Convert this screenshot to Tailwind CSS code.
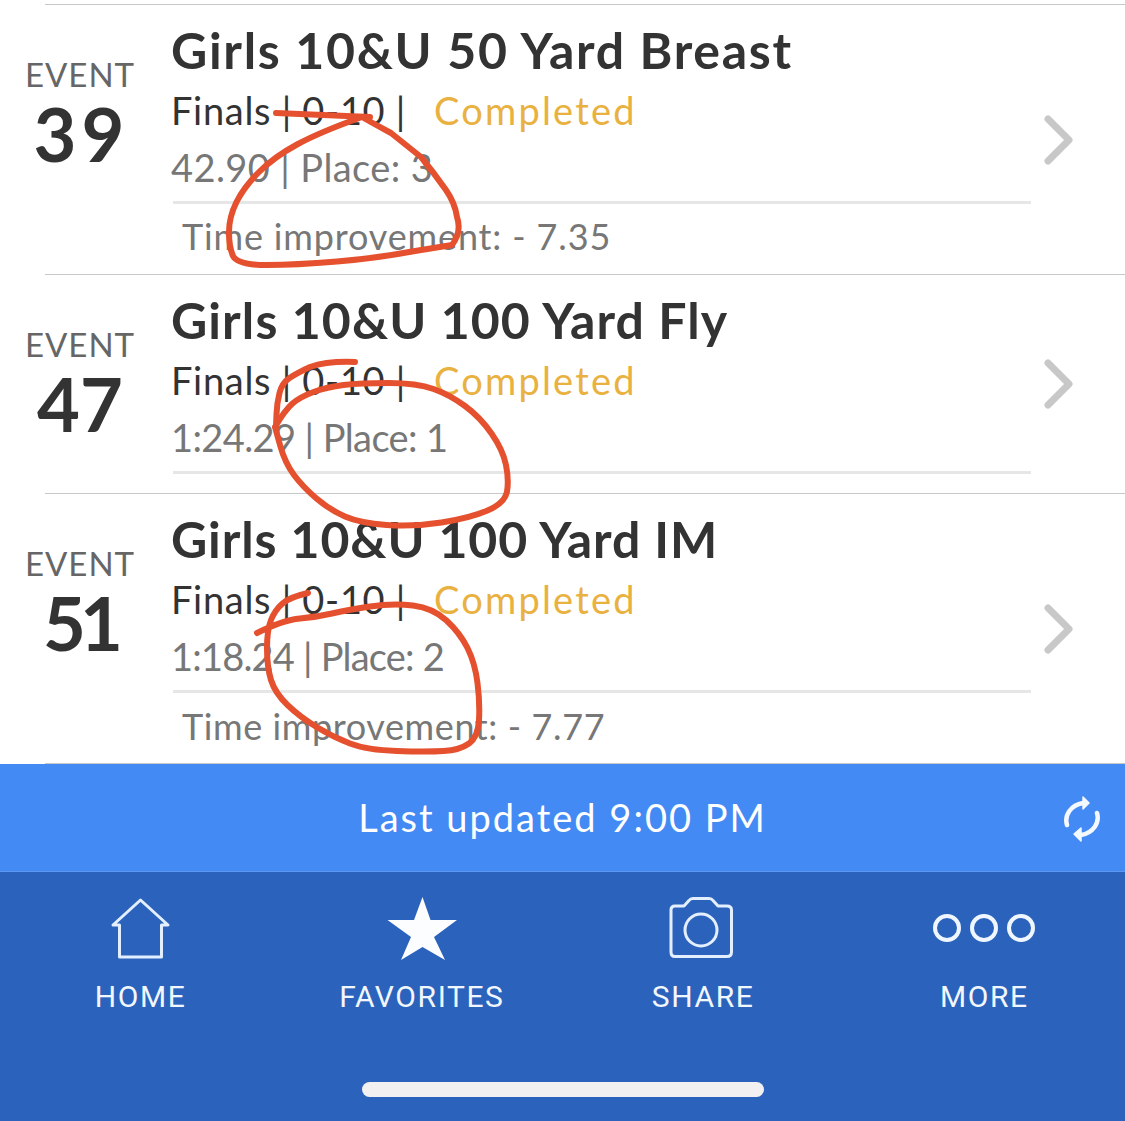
<!DOCTYPE html>
<html lang="en">
<head>
    <meta charset="UTF-8">
    <title>Meet Results</title>
    <script src="https://cdn.jsdelivr.net/npm/@tailwindcss/browser@4"></script>
</head>
<body class="bg-white font-['Lato',sans-serif] overflow-hidden">
    <div class="relative w-[1125px] h-[1121px] flex flex-col">
        <!-- event list -->
        <div class="h-[764px] pt-1 overflow-hidden">
            <div class="ml-[45px] h-px bg-[#c8c8c8]"></div>
            <div class="h-[269px] flex">
                <div class="w-[160px] px-[26px] shrink-0 flex flex-col items-center pt-[50px]">
                    <div class="text-[33px] leading-[38px] tracking-[1px] text-[#666]">EVENT</div>
                    <div class="mt-[3px] ml-[3px] text-[74px] leading-[76px] tracking-[5px] font-bold text-[#333]">39</div>
                </div>
                <div class="ml-[11px] w-[860px] pt-[15px]">
                    <div class="text-[50px] leading-[60px] tracking-[1.7px] font-bold text-[#333]">Girls 10&amp;U 50 Yard Breast</div>
                    <div class="text-[38px] leading-[60px] text-[#333] flex"><span class="w-[263px] tracking-[0.7px]">Finals | 0-10 |</span><span class="tracking-[2.2px] text-[#e9b140]">Completed</span></div>
                    <div class="mt-px text-[38px] leading-[52px] tracking-[0.4px] text-[#777]">42.90 | Place: 3</div>
                    <div class="ml-[2px] mt-[8px] h-[3px] bg-[#e6e6e6]"></div>
                    <div class="pl-[11px] mt-[10px] text-[36px] leading-[44px] tracking-[0.85px] text-[#777]">Time improvement: - 7.35</div>
                </div>
                <div class="flex-1 flex items-center pl-[10px]">
                    <svg width="34" height="52" viewBox="0 0 34 52" fill="none" stroke="#c8c8c8" stroke-width="7" stroke-linecap="round" stroke-linejoin="round"><path d="M7 5L28 26L7 47"/></svg>
                </div>
            </div>
            <div class="ml-[45px] h-px bg-[#c8c8c8]"></div>
            <div class="h-[218px] flex">
                <div class="w-[160px] px-[26px] shrink-0 flex flex-col items-center pt-[50px]">
                    <div class="text-[33px] leading-[38px] tracking-[1px] text-[#666]">EVENT</div>
                    <div class="mt-[3px] text-[74px] leading-[76px] font-bold text-[#333]">47</div>
                </div>
                <div class="ml-[11px] w-[860px] pt-[15px]">
                    <div class="text-[50px] leading-[60px] tracking-[1.1px] font-bold text-[#333]">Girls 10&amp;U 100 Yard Fly</div>
                    <div class="text-[38px] leading-[60px] text-[#333] flex"><span class="w-[263px] tracking-[0.7px]">Finals | 0-10 |</span><span class="tracking-[2.2px] text-[#e9b140]">Completed</span></div>
                    <div class="mt-px text-[38px] leading-[52px] tracking-[-0.6px] text-[#777]">1:24.29 | Place: 1</div>
                    <div class="ml-[2px] mt-[8px] h-[3px] bg-[#e6e6e6]"></div>
                </div>
                <div class="flex-1 flex items-center pl-[10px]">
                    <svg width="34" height="52" viewBox="0 0 34 52" fill="none" stroke="#c8c8c8" stroke-width="7" stroke-linecap="round" stroke-linejoin="round"><path d="M7 5L28 26L7 47"/></svg>
                </div>
            </div>
            <div class="ml-[45px] h-px bg-[#c8c8c8]"></div>
            <div class="h-[269px] flex">
                <div class="w-[160px] px-[26px] shrink-0 flex flex-col items-center pt-[50px]">
                    <div class="text-[33px] leading-[38px] tracking-[1px] text-[#666]">EVENT</div>
                    <div class="mt-[3px] text-[74px] leading-[76px] tracking-[-6px] font-bold text-[#333]">51</div>
                </div>
                <div class="ml-[11px] w-[860px] pt-[15px]">
                    <div class="text-[50px] leading-[60px] tracking-[0.9px] font-bold text-[#333]">Girls 10&amp;U 100 Yard IM</div>
                    <div class="text-[38px] leading-[60px] text-[#333] flex"><span class="w-[263px] tracking-[0.7px]">Finals | 0-10 |</span><span class="tracking-[2.2px] text-[#e9b140]">Completed</span></div>
                    <div class="mt-px text-[38px] leading-[52px] tracking-[-0.8px] text-[#777]">1:18.24 | Place: 2</div>
                    <div class="ml-[2px] mt-[8px] h-[3px] bg-[#e6e6e6]"></div>
                    <div class="pl-[11px] mt-[11px] text-[36px] leading-[44px] tracking-[0.6px] text-[#777]">Time improvement: - 7.77</div>
                </div>
                <div class="flex-1 flex items-center pl-[10px]">
                    <svg width="34" height="52" viewBox="0 0 34 52" fill="none" stroke="#c8c8c8" stroke-width="7" stroke-linecap="round" stroke-linejoin="round"><path d="M7 5L28 26L7 47"/></svg>
                </div>
            </div>
            <div class="ml-[45px] h-px bg-[#c8c8c8]"></div>
        </div>

        <!-- last updated bar -->
        <div class="relative h-[108px] bg-[#438af5] border-b border-[#5b97ef] flex items-center justify-center text-white text-[38px] tracking-[2px]">
            Last updated 9:00 PM
            <svg class="absolute right-[24px] top-[32px]" width="38" height="46" viewBox="0 0 38 46" fill="none" stroke="#f4f8ff" stroke-width="4.5" stroke-linecap="round">
                <path d="M4 29C1 19 8 9 20 7"/>
                <path d="M34 17C37 27 30 37 18 39"/>
                <path d="M26 7L20 1V13Z" fill="#f4f8ff" stroke-width="1.5" stroke-linejoin="round"/>
                <path d="M11 38L18 32V45Z" fill="#f4f8ff" stroke-width="1.5" stroke-linejoin="round"/>
            </svg>
        </div>

        <!-- tab bar -->
        <div class="relative flex-1 bg-[#2b63bc] grid grid-cols-4 text-[#f2f6fd] font-['Roboto',sans-serif] text-[30px] tracking-[1.6px]">
            <div class="flex flex-col items-center pt-[25px]">
                <svg class="h-[64px]" width="64" height="64" viewBox="0 0 64 64" fill="none" stroke="#e3efff" stroke-width="3" stroke-linejoin="round"><path d="M31.5 3L59 28H52.5V60H10.5V28H4Z"/></svg>
                <div class="mt-[18px] leading-[36px]">HOME</div>
            </div>
            <div class="flex flex-col items-center pt-[25px]">
                <svg class="h-[64px]" width="72" height="64" viewBox="0 0 72 64" fill="#fbfdff"><path d="M36.5 0L44.5 23H71L48 40L59 63L36.5 50L15 63L25 40L1.5 23H28Z"/></svg>
                <div class="mt-[18px] leading-[36px]">FAVORITES</div>
            </div>
            <div class="flex flex-col items-center pt-[25px]">
                <svg class="h-[64px]" width="68" height="64" viewBox="0 0 68 64" fill="none" stroke="#e3efff" stroke-width="3" stroke-linejoin="round"><path d="M6 9H15L20 3.5C21 2 22 1.5 24 1.5H40C42 1.5 43 2 44 3.5L49 9H58C61 9 62.5 10.5 62.5 13V55C62.5 58 61 59.5 58 59.5H6C3 59.5 2 58 2 55V13C2 10.5 3 9 6 9Z"/><circle cx="32" cy="33" r="16"/></svg>
                <div class="mt-[18px] leading-[36px]">SHARE</div>
            </div>
            <div class="flex flex-col items-center pt-[25px]">
                <svg class="h-[64px]" width="104" height="64" viewBox="0 0 104 64" fill="none" stroke="#f0f6ff" stroke-width="4"><circle cx="15" cy="31" r="12"/><circle cx="52" cy="31" r="12"/><circle cx="89" cy="31" r="12"/></svg>
                <div class="mt-[18px] leading-[36px]">MORE</div>
            </div>
            <div class="absolute left-[362px] top-[210px] w-[402px] h-[15px] rounded-full bg-[#f2f0f0]"></div>
        </div>

        <!-- red pen marks drawn over the screenshot -->
        <svg class="absolute left-0 top-0 pointer-events-none" width="1125" height="1121" viewBox="0 0 1125 1121" fill="none" stroke="#e5502e" stroke-width="6" stroke-linecap="round" stroke-linejoin="round">
            <path d="M276 113L370 117"/>
            <path d="M362 117Q320 132 297 144.5Q274 157 259 172Q244 187 236.5 202Q229 217 229 232Q229 247 233 256Q238 265 266.5 265Q295 265 337 261.5Q379 258 415 251L452 245Q462 232 457 217Q455 203 446 190Q434 173 421 157Q406 145 391 133Q376 125 362 117"/>
            <path d="M355 362Q327 361 310 367Q297 373 289.5 378Q282 383 279.5 393Q277 403 276.5 414L276 427"/>
            <path d="M275 427Q285 410 292.5 403.5Q300 397 313.5 392Q327 387 343.5 385Q360 383 388.5 383Q417 383 433.5 389Q450 395 465 406Q480 417 491.5 433.5Q503 450 506 465Q509 480 507 491.5Q505 503 487.5 510.5Q470 518 441.5 522.5Q413 527 386.5 525Q360 523 345 516.5Q330 510 316.5 498.5Q303 487 294 475Q285 463 280 445L275 427"/>
            <path d="M308 593Q290 597 282.5 603.5Q275 610 271 620Q267 630 267 648.5Q267 667 271 680Q275 693 287.5 705Q300 717 316.5 727Q333 737 350 743.5Q367 750 397 751Q427 752 443.5 751Q460 750 469 743.5Q478 737 479 720Q480 703 477.5 683Q475 663 467.5 648Q460 633 446.5 620.5Q433 608 413 605.5Q393 603 370 606.5Q347 610 332 613.5Q317 617 300 618.5Q283 620 257 633"/>
        </svg>
    </div>
</body>
</html>
